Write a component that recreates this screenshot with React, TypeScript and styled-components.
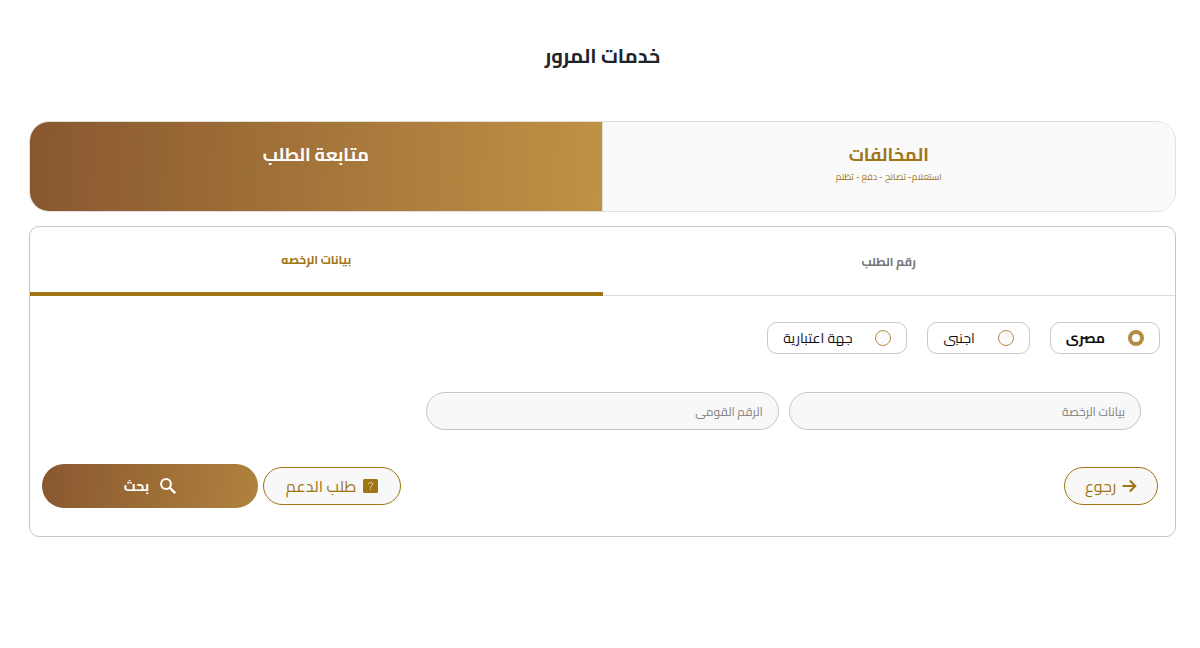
import React, { useState } from "react";
import styled, { createGlobalStyle, css } from "styled-components";

const gold = "#a07514";
const fontStack = `"Cairo", "DejaVu Sans", sans-serif`;

const GlobalStyle = createGlobalStyle`
  *, *::before, *::after { box-sizing: border-box; }
  body { margin: 0; background: #fff; color: #212529; font-family: ${fontStack}; }
  button, input { font-family: inherit; }
`;

const Page = styled.main`
  padding: 36px 24px 36px 29px;
`;

const Title = styled.h1`
  margin: 0 0 45px;
  font-size: 20px;
  line-height: 40px;
  font-weight: 700;
  text-align: center;
`;

const ServiceTabs = styled.div`
  display: grid;
  grid-template-columns: 1fr 1fr;
  margin-bottom: 14px;
  border: 1px solid #e0e0e0;
  border-radius: 20px;
  overflow: hidden;
`;

const ServiceTab = styled.button<{ $active: boolean }>`
  display: flex;
  flex-direction: column;
  align-items: center;
  min-height: 89px;
  padding: 19px 16px 0;
  border: 0;
  background: #fafafa;
  color: ${gold};
  cursor: pointer;
  & + & {
    border-right: 1px solid #dedede;
  }
  ${(p) =>
    p.$active &&
    css`
      background: linear-gradient(92deg, #89572f, #bf9245);
      color: #fff;
    `}
`;

const ServiceName = styled.span`
  font-size: 18px;
  line-height: 28px;
  font-weight: 700;
`;

const ServiceNote = styled.span`
  font-size: 9px;
  line-height: 16px;
`;

const Panel = styled.section`
  border: 1px solid #c6c6c6;
  border-radius: 10px;
`;

const PanelTabs = styled.div`
  display: grid;
  grid-template-columns: 1fr 1fr;
`;

const PanelTab = styled.button<{ $active: boolean }>`
  height: 69px;
  padding: 0 16px;
  border: 0;
  border-bottom: 1px solid #dcdcdc;
  background: transparent;
  color: #757575;
  font-size: 12px;
  font-weight: 700;
  cursor: pointer;
  ${(p) =>
    p.$active &&
    css`
      border-bottom: 4px solid ${gold};
      color: ${gold};
    `}
`;

const SearchForm = styled.form`
  padding: 26px 12px 28px;
`;

const Choices = styled.fieldset`
  display: flex;
  gap: 20px;
  margin: 0 0 38px;
  padding: 0 3px;
  border: 0;
`;

const Choice = styled.label<{ $active: boolean }>`
  display: flex;
  align-items: center;
  gap: 23px;
  height: 32px;
  padding: 0 15px;
  border: 1px solid #c8c8c8;
  border-radius: 10px;
  color: #111;
  font-size: 14px;
  font-weight: ${(p) => (p.$active ? 700 : 400)};
  white-space: nowrap;
  cursor: pointer;
`;

const Radio = styled.input`
  appearance: none;
  width: 16px;
  height: 16px;
  margin: 0;
  border: 1px solid #b58d44;
  border-radius: 50%;
  background: #fafafa;
  &:checked {
    border-width: 4px;
    background: #fff;
  }
`;

const Fields = styled.div`
  display: grid;
  grid-template-columns: repeat(3, 1fr);
  gap: 10px;
  margin-bottom: 34px;
  padding: 0 22px;
`;

const Field = styled.input`
  width: 100%;
  height: 38px;
  padding: 0 15px;
  border: 1px solid #c6c6c6;
  border-radius: 19px;
  background: #f8f8f8;
  color: #212529;
  font-size: 12px;
  &::placeholder {
    color: #808080;
    opacity: 1;
  }
`;

const Actions = styled.div`
  display: flex;
  align-items: center;
  gap: 5px;
  padding: 0 5px 0 0;
`;

const OutlineButton = styled.button<{ $pushRest?: boolean; $wide?: boolean }>`
  display: flex;
  align-items: center;
  justify-content: center;
  gap: ${(p) => (p.$wide ? "7px" : "6px")};
  min-width: ${(p) => (p.$wide ? "138px" : "94px")};
  height: 38px;
  padding: 0 12px;
  margin-left: ${(p) => (p.$pushRest ? "auto" : "0")};
  border: 1px solid ${gold};
  border-radius: 19px;
  background: #f8f8f8;
  color: ${gold};
  font-size: 16px;
  white-space: nowrap;
  cursor: pointer;
`;

const SearchButton = styled.button`
  display: flex;
  align-items: center;
  justify-content: center;
  gap: 11px;
  min-width: 216px;
  height: 44px;
  border: 0;
  border-radius: 22px;
  background: linear-gradient(97deg, #89572f, #b0823e);
  color: #fff;
  font-size: 14px;
  font-weight: 700;
  cursor: pointer;
`;

const ArrowIcon = () => (
  <svg width="15" height="14" viewBox="0 0 15 14" fill="none" stroke="currentColor" strokeWidth="2" aria-hidden="true">
    <path d="M0.5 7H13M7.8 1.5L13.3 7L7.8 12.5" />
  </svg>
);

const HelpIcon = () => (
  <svg width="15" height="14" viewBox="0 0 15 14" aria-hidden="true">
    <rect width="15" height="14" rx="1.5" fill="currentColor" />
    <path
      d="M5.5 5.3C5.5 2.8 9.6 2.8 9.6 5.1C9.6 6.7 7.5 6.6 7.5 8.6"
      fill="none"
      stroke="#f3e6c8"
      strokeWidth="0.9"
    />
    <circle cx="7.5" cy="10.3" r="0.6" fill="#f3e6c8" />
  </svg>
);

const SearchIcon = () => (
  <svg width="16" height="16" viewBox="0 0 16 16" fill="none" stroke="currentColor" strokeWidth="2" aria-hidden="true">
    <circle cx="6" cy="6" r="4.9" />
    <path d="M9.7 9.7L15.2 15.2" strokeWidth="2.4" />
  </svg>
);

const services = [
  { id: "fines", name: "المخالفات", note: "استعلام- تصالح - دفع - تظلم" },
  { id: "tracking", name: "متابعة الطلب", note: "" },
];

const modes = [
  { id: "request", name: "رقم الطلب" },
  { id: "license", name: "بيانات الرخصه" },
];

const owners = ["مصرى", "اجنبى", "جهة اعتبارية"];

export default function App() {
  const [service, setService] = useState("tracking");
  const [mode, setMode] = useState("license");
  const [owner, setOwner] = useState(owners[0]);

  return (
    <>
      <GlobalStyle />
      <Page dir="rtl" lang="ar">
        <Title>خدمات المرور</Title>
        <ServiceTabs role="tablist">
          {services.map((s) => (
            <ServiceTab
              key={s.id}
              type="button"
              role="tab"
              aria-selected={service === s.id}
              $active={service === s.id}
              onClick={() => setService(s.id)}
            >
              <ServiceName>{s.name}</ServiceName>
              {s.note && <ServiceNote>{s.note}</ServiceNote>}
            </ServiceTab>
          ))}
        </ServiceTabs>
        <Panel>
          <PanelTabs role="tablist">
            {modes.map((m) => (
              <PanelTab
                key={m.id}
                type="button"
                role="tab"
                aria-selected={mode === m.id}
                $active={mode === m.id}
                onClick={() => setMode(m.id)}
              >
                {m.name}
              </PanelTab>
            ))}
          </PanelTabs>
          <SearchForm onSubmit={(e) => e.preventDefault()}>
            <Choices>
              {owners.map((o) => (
                <Choice key={o} $active={owner === o}>
                  <Radio type="radio" name="owner" checked={owner === o} onChange={() => setOwner(o)} />
                  {o}
                </Choice>
              ))}
            </Choices>
            <Fields>
              <Field type="text" placeholder="بيانات الرخصة" aria-label="بيانات الرخصة" />
              <Field type="text" placeholder="الرقم القومى" aria-label="الرقم القومى" />
            </Fields>
            <Actions>
              <OutlineButton type="button" $pushRest>
                <ArrowIcon />
                رجوع
              </OutlineButton>
              <OutlineButton type="button" $wide>
                <HelpIcon />
                طلب الدعم
              </OutlineButton>
              <SearchButton type="submit">
                <SearchIcon />
                بحث
              </SearchButton>
            </Actions>
          </SearchForm>
        </Panel>
      </Page>
    </>
  );
}
